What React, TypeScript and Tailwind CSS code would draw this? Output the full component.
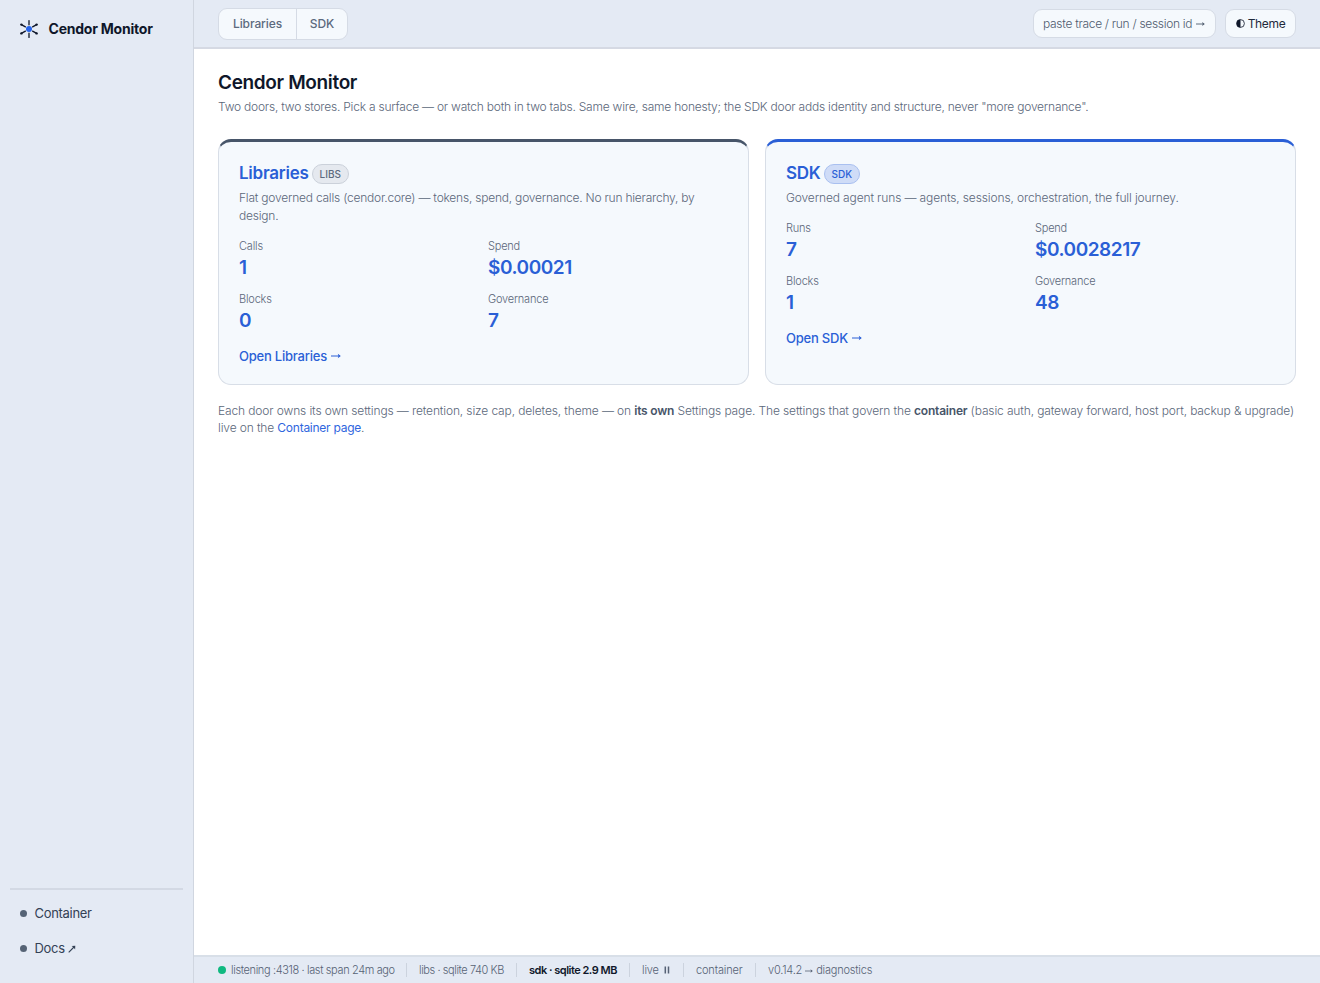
import type { ReactNode } from "react"

type Stat = { label: string; value: string }

const libStats: Stat[] = [
    { label: "Calls", value: "1" },
    { label: "Spend", value: "$0.00021" },
    { label: "Blocks", value: "0" },
    { label: "Governance", value: "7" },
]

const sdkStats: Stat[] = [
    { label: "Runs", value: "7" },
    { label: "Spend", value: "$0.0028217" },
    { label: "Blocks", value: "1" },
    { label: "Governance", value: "48" },
]

function Logo() {
    return (
        <svg width="20" height="20" viewBox="0 0 20 20" className="shrink-0">
            <g stroke="#0f172a" strokeWidth="1.3" strokeLinecap="round">
                <path d="M10 1.6v4.2M10 14.2v4.2M2.4 5.6L6.4 7.9M13.6 12.1l4 2.3M17.6 5.6L13.6 7.9M6.4 12.1l-4 2.3" />
            </g>
            <g fill="#0f172a">
                <circle cx="2.4" cy="5.6" r="1.2" />
                <circle cx="17.6" cy="5.6" r="1.2" />
                <circle cx="2.4" cy="14.4" r="1.2" />
                <circle cx="17.6" cy="14.4" r="1.2" />
            </g>
            <circle cx="10" cy="10" r="3" fill="#2563eb" />
        </svg>
    )
}

function HalfMoon() {
    return (
        <svg width="9" height="9" viewBox="0 0 9 9" className="shrink-0">
            <circle cx="4.5" cy="4.5" r="3.9" fill="none" stroke="#0f172a" strokeWidth="0.8" />
            <path d="M4.5 0.6a3.9 3.9 0 0 0 0 7.8z" fill="#0f172a" />
        </svg>
    )
}

function Arrow({ width = 10 }: { width?: number }) {
    return (
        <svg width={width} height="6" viewBox="0 0 10 6" className="mt-px shrink-0">
            <path d="M0 3h8.6" stroke="currentColor" strokeWidth="1" />
            <path d="M6.8 0.8L9.8 3L6.8 5.2L7.5 3z" fill="currentColor" />
        </svg>
    )
}

function ArrowOut() {
    return (
        <svg width="8" height="8" viewBox="0 0 8 8" className="mt-px shrink-0">
            <path d="M0.7 7.3L6 2" stroke="currentColor" strokeWidth="1.1" />
            <path d="M3.6 0.9L7.3 0.7L7.1 4.4L5.6 2.4z" fill="currentColor" />
        </svg>
    )
}

function Door({ title, badge, text, stats, cardClass, badgeClass, textClass }: {
    title: string
    badge: string
    text: string
    stats: Stat[]
    cardClass: string
    badgeClass: string
    textClass: string
}) {
    return (
        <a className={`block rounded-[13px] border border-t-[3px] border-[#d8dee7] bg-[#f5f9fd] px-5 pt-5 pb-[18px] ${cardClass}`}>
            <div className="flex h-[22px] items-center gap-[3px]">
                <h2 className="text-[17px] leading-[22px] font-semibold tracking-[-0.25px] text-[#2a5fd6]">{title}</h2>
                <span className={`mt-0.5 flex h-5 items-center rounded-full border px-[7px] text-[10px] font-medium ${badgeClass}`}>{badge}</span>
            </div>
            <p className={`mt-[5px] pr-6 text-[12px] leading-[18px] font-light text-[#5b677a] ${textClass}`}>{text}</p>
            <div className="mt-[13px] grid grid-cols-2 gap-x-[9px] gap-y-[9.5px]">
                {stats.map((stat) => (
                    <div key={stat.label}>
                        <div className="text-[11px] leading-[17px] font-light tracking-[-0.2px] text-[#5b677a]">{stat.label}</div>
                        <div className="text-[19px] leading-[26px] font-semibold tracking-[-0.45px] text-[#2a5fd6]">{stat.value}</div>
                    </div>
                ))}
            </div>
            <div className="mt-3 flex items-center gap-1 text-[13px] leading-5 font-medium tracking-[-0.22px] text-[#2a5fd6]">
                Open {title} <Arrow />
            </div>
        </a>
    )
}

function StatusItem({ children, className = "" }: { children: ReactNode; className?: string }) {
    return <span className={`flex h-3.5 shrink-0 items-center border-l border-[#ccd3de] whitespace-nowrap ${className}`}>{children}</span>
}

export default function App() {
    return (
        <div className="flex h-screen w-full overflow-hidden bg-white font-['Inter',sans-serif] text-[#0f172a]">

            {/* Sidebar */}
            <aside className="flex w-[194px] shrink-0 flex-col border-r border-[#d0d6e0] bg-[#e4eaf4] px-2.5">
                <div className="flex items-center gap-[9.5px] pt-[19px] pl-[9px]">
                    <Logo />
                    <span className="text-[14px] leading-5 font-bold tracking-[-0.22px] whitespace-nowrap">Cendor Monitor</span>
                </div>
                <nav className="mt-auto flex flex-col border-t-2 border-[#d3d9e4] pt-[6px] pb-[17px] text-[13px] tracking-[-0.3px] text-[#334155]">
                    <a className="flex h-[35px] items-center gap-[7.5px] pl-2.5">
                        <span className="size-[7px] rounded-full bg-[#556375]" />
                        Container
                    </a>
                    <a className="flex h-[35px] items-center gap-[7.5px] pl-2.5">
                        <span className="size-[7px] rounded-full bg-[#556375]" />
                        <span className="flex items-center gap-[3px]">Docs <ArrowOut /></span>
                    </a>
                </nav>
            </aside>

            <div className="flex min-w-0 flex-1 flex-col">

                {/* Top bar */}
                <header className="flex h-[49px] shrink-0 items-start border-b-2 border-[#d5d9e3] bg-[#e4eaf4] px-6">
                    <div className="mt-2 flex h-8 items-center rounded-[9px] border border-[#d5dbe5] bg-[#f5f9fd] text-[12px] font-medium text-[#5c6a7e]">
                        <a className="flex h-full w-[78px] items-center justify-center border-r border-[#d5dbe5] pb-px tracking-[-0.1px]">Libraries</a>
                        <a className="flex h-full w-[50px] items-center justify-center pb-px">SDK</a>
                    </div>
                    <div className="mt-[9px] ml-auto flex gap-[9px]">
                        <div className="flex h-[29px] w-[183px] items-center gap-1 rounded-[9px] border border-[#d5dbe5] bg-[#f5f9fd] pl-[9px] text-[12px] font-light tracking-[-0.3px] whitespace-nowrap text-[#4f5b6e]">
                            paste trace / run / session id <Arrow width={9} />
                        </div>
                        <button className="flex h-[29px] w-[71px] items-center justify-center gap-[3px] rounded-[9px] border border-[#d5dbe5] bg-[#f5f9fd] text-[12px] tracking-[-0.35px] text-[#1e293b]">
                            <HalfMoon /> Theme
                        </button>
                    </div>
                </header>

                <main className="min-h-0 flex-1 px-6 pt-[21px]">
                    <h1 className="text-[19px] leading-[26px] font-semibold tracking-[-0.35px]">Cendor Monitor</h1>
                    <p className="mt-0.5 text-[12px] leading-[18px] font-light tracking-[-0.22px] whitespace-nowrap text-[#5b677a]">
                        Two doors, two stores. Pick a surface — or watch both in two tabs. Same wire, same honesty; the SDK door adds identity and structure, never "more governance".
                    </p>

                    <div className="mt-[23px] grid grid-cols-2 gap-4">
                        <Door
                            title="Libraries"
                            badge="LIBS"
                            text="Flat governed calls (cendor.core) — tokens, spend, governance. No run hierarchy, by design."
                            stats={libStats}
                            cardClass="border-t-[#475569]"
                            badgeClass="border-[#cbd1da] bg-[#e5e9ef] text-[#5c6a7e]"
                            textClass="tracking-[-0.22px]"
                        />
                        <Door
                            title="SDK"
                            badge="SDK"
                            text="Governed agent runs — agents, sessions, orchestration, the full journey."
                            stats={sdkStats}
                            cardClass="border-t-[#2a5fd6]"
                            badgeClass="border-[#a9c0f0] bg-[#cfdcf7] text-[#2a5fd6]"
                            textClass="tracking-[-0.13px]"
                        />
                    </div>

                    <p className="mt-[17px] text-[12px] leading-[17.5px] font-light tracking-[-0.13px] text-[#5b677a]">
                        Each door owns its own settings — retention, size cap, deletes, theme — on <b className="font-semibold tracking-[-0.2px] text-[#475569]">its own</b> Settings page. The settings that govern the <b className="font-semibold tracking-[-0.2px] text-[#475569]">container</b> (basic auth, gateway forward, host port, backup &amp; upgrade) live on the <a className="font-normal tracking-[-0.25px] text-[#2f66de]">Container page</a>.
                    </p>
                </main>

                {/* Status bar */}
                <footer className="flex h-7 shrink-0 items-center border-t-2 border-[#d8dfe8] bg-[#e4eaf4] pl-6 text-[11px] font-light tracking-[-0.3px] text-[#566275]">
                    <span className="flex w-[188px] shrink-0 items-center gap-[5px] tracking-[-0.37px] whitespace-nowrap">
                        <span className="size-2 shrink-0 rounded-full bg-[#10b981]" />
                        listening :4318 · last span 24m ago
                    </span>
                    <StatusItem className="w-[110px] pl-3 tracking-[-0.42px]">libs · sqlite 740 KB</StatusItem>
                    <StatusItem className="w-[113px] pl-3 font-semibold tracking-[-0.5px] text-[#0f172a]">sdk · sqlite 2.9 MB</StatusItem>
                    <StatusItem className="w-[54px] gap-[5px] pl-3 tracking-[-0.15px]">
                        live
                        <svg width="6" height="8" viewBox="0 0 6 8"><path d="M1.3 .5v7M4.5 .5v7" stroke="currentColor" strokeWidth="1.5" /></svg>
                    </StatusItem>
                    <StatusItem className="w-[72px] pl-3 tracking-[-0.15px]">container</StatusItem>
                    <StatusItem className="gap-[3px] pl-3 tracking-[-0.2px]">v0.14.2 <Arrow width={8} /> diagnostics</StatusItem>
                </footer>
            </div>
        </div>
    )
}
